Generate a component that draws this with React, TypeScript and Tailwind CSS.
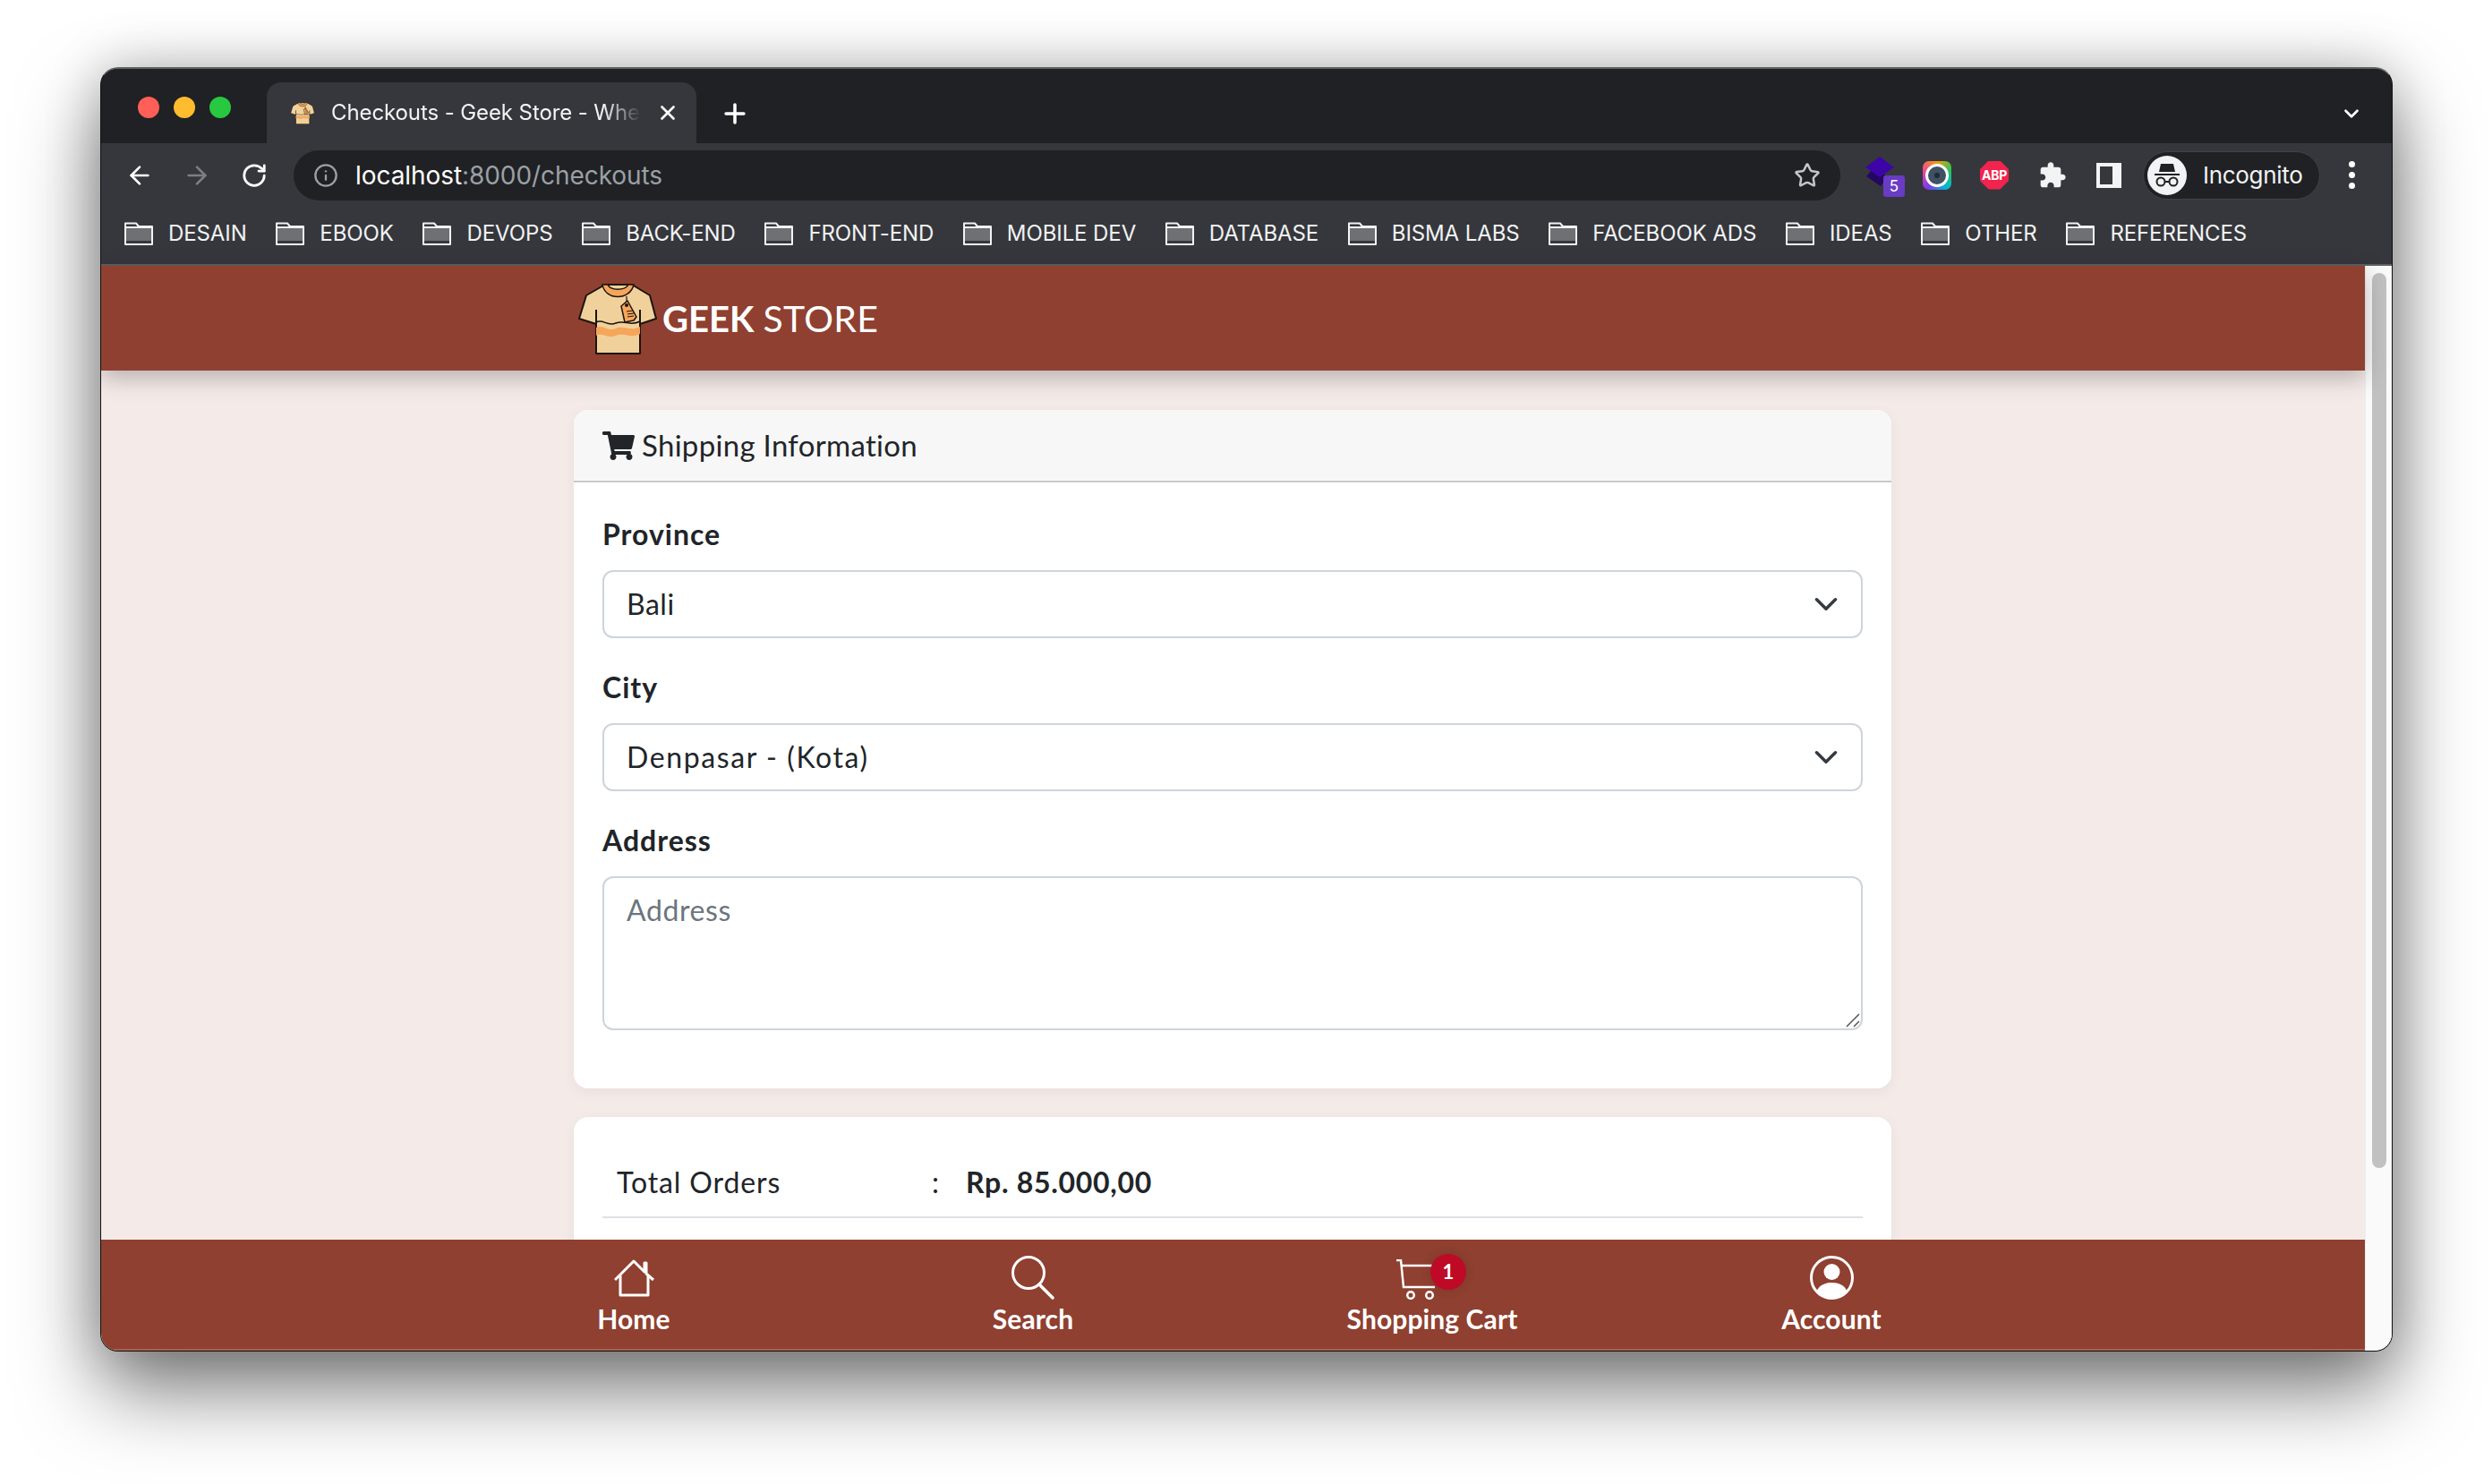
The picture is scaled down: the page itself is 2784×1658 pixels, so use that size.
import { ChevronDown, Star, Plus, X, ArrowLeft, ArrowRight, RotateCw, Info } from 'lucide-react';
import { FaShoppingCart } from 'react-icons/fa';

const bookmarks = ['DESAIN', 'EBOOK', 'DEVOPS', 'BACK-END', 'FRONT-END', 'MOBILE DEV', 'DATABASE', 'BISMA LABS', 'FACEBOOK ADS', 'IDEAS', 'OTHER', 'REFERENCES'];

function Shirt({ className }: { className: string }) {
  return (
    <svg className={className} viewBox="0 0 88 80" fill="none">
      <path d="M30 2H60L80 14L87 40L69 46V79H20V46L1 40L9 14Z" fill="#f1d19b" stroke="#1c1410" strokeWidth="2" strokeLinejoin="round" />
      <path d="M27 2C30 20 58 20 62 2L56 2C52 9 36 9 33 2Z" fill="#f6a65a" stroke="#1c1410" strokeWidth="1.5" />
      <path d="M20 50C28 46 32 55 42 51C52 47 58 55 69 49V57C58 63 52 55 42 59C32 63 28 55 20 59Z" fill="#f6a65a" />
      <path d="M20 44C28 40 32 49 42 45C52 41 58 49 69 43" stroke="#1c1410" strokeWidth="1.5" />
      <path d="M20 30V46M69 30V46" stroke="#1c1410" strokeWidth="2" />
      <path d="M54 15V24" stroke="#1c1410" strokeWidth="1.2" />
      <path d="M48 26L55 20L65 38L62 42L52 44Z" fill="#f6a65a" stroke="#1c1410" strokeWidth="1.5" strokeLinejoin="round" />
      <circle cx="54" cy="25" r="2" fill="#1c1410" />
      <path d="M54 32L61 31M55 35L62 34M55 38L62 37" stroke="#1c1410" strokeWidth="1" />
    </svg>
  );
}

function FolderIcon() {
  return (
    <svg className="w-[32px] h-[26px] mr-[17px] shrink-0" viewBox="0 0 32 26" fill="none">
      <path d="M1 1.5H13L16 5H31V25H1Z" fill="#36373c" stroke="#f1f3f4" strokeWidth="2" strokeLinejoin="round" />
      <path d="M2 7H30V21H2Z" fill="#6f7073" />
      <path d="M2 6H30" stroke="#f1f3f4" strokeWidth="2" />
    </svg>
  );
}

function NavItem({ label, icon }: { label: string; icon: React.ReactNode }) {
  return (
    <div className="w-[446px] flex flex-col items-center">
      <div className="h-[50px] flex items-end">{icon}</div>
      <span className="mt-[4px] text-[30px] leading-[36px] font-bold tracking-[0.1px] text-white">{label}</span>
    </div>
  );
}

function Field({ label, children }: { label: string; children: React.ReactNode }) {
  return (
    <div className="mb-[31px]">
      <label className="block text-[32px] leading-[48px] font-bold tracking-[1px] text-[#212529] mb-[16px]">{label}</label>
      {children}
    </div>
  );
}

function Select({ value, spacing }: { value: string; spacing: string }) {
  return (
    <div className="h-[76px] border-2 border-[#ced4da] rounded-[12px] pl-[25px] pr-[18px] flex items-center justify-between bg-white">
      <span className={`text-[32px] text-[#212529] ${spacing}`}>{value}</span>
      <ChevronDown className="w-[42px] h-[42px] text-[#343a40]" strokeWidth={2} />
    </div>
  );
}

export default function App() {
  return (
    <div className="w-[2784px] h-[1658px] bg-white pt-[75px] pl-[112px] overflow-hidden">
      <div className="w-[2561px] h-[1435px] rounded-[20px] overflow-hidden flex flex-col bg-[#202124] border border-[#111] border-t-2 border-t-[#5f6063] shadow-[0_44px_90px_rgba(0,0,0,0.5),0_0_60px_rgba(0,0,0,0.22)] font-['Inter',sans-serif]">
        {/* tab strip */}
        <div className="h-[83px] shrink-0 flex items-end pl-[41px] pr-[32px] bg-[#202124]">
          <div className="flex gap-[16px] self-start mt-[31px] mr-[40px]">
            <span className="w-[24px] h-[24px] rounded-full bg-[#ff5f57]" />
            <span className="w-[24px] h-[24px] rounded-full bg-[#febc2e]" />
            <span className="w-[24px] h-[24px] rounded-full bg-[#28c840]" />
          </div>
          <div className="w-[480px] h-[68px] rounded-t-[16px] bg-[#36373c] flex items-center pl-[26px] text-white">
            <Shirt className="w-[28px] h-[25px] mr-[18px] shrink-0" />
            <span className="w-[346px] overflow-hidden whitespace-nowrap text-[24px] tracking-[-0.1px] text-[#f1f3f4] [mask-image:linear-gradient(to_right,black_88%,transparent)]">Checkouts - Geek Store - Where Geeks Shop</span>
            <X className="w-[26px] h-[26px] ml-[17px] shrink-0" strokeWidth={2.5} />
          </div>
          <Plus className="w-[34px] h-[34px] text-white ml-[26px] mb-[16px]" strokeWidth={2.5} />
          <ChevronDown className="w-[26px] h-[26px] text-white ml-auto mb-[20px]" strokeWidth={2.5} />
        </div>
        {/* toolbar */}
        <div className="h-[69px] shrink-0 bg-[#36373c] flex items-center pt-[2px] pl-[27px]">
          <ArrowLeft className="w-[32px] h-[32px] text-white mr-[32px]" strokeWidth={2} />
          <ArrowRight className="w-[32px] h-[32px] text-[#7d7e82] mr-[33px]" strokeWidth={2} />
          <RotateCw className="w-[30px] h-[30px] text-white mr-[29px]" strokeWidth={2.2} />
          <div className="w-[1728px] h-[56px] rounded-full bg-[#202124] flex items-center pl-[22px] pr-[22px]">
            <Info className="w-[28px] h-[28px] text-[#9aa0a6] mr-[19px]" strokeWidth={2} />
            <span className="text-[28px] tracking-[-0.07px] text-white">localhost</span>
            <span className="text-[28px] tracking-[-0.07px] text-[#9aa0a6]">:8000/checkouts</span>
            <Star className="w-[30px] h-[30px] ml-auto text-[#c4c7c9]" strokeWidth={2} />
          </div>
          <div className="relative w-[32px] h-[44px] ml-[28px] mr-[32px]">
            <svg className="w-[32px] h-[34px] mt-[1px]" viewBox="0 0 32 34">
              <path d="M1 22L8 14L25 22L17 33Z" fill="#22085f" />
              <path d="M16 0L32 12L16 23L0 12Z" fill="#3d05a8" />
            </svg>
            <span className="absolute -right-[12px] bottom-[-2px] w-[24px] h-[24px] rounded-[3px] bg-[#6a3bc4] text-white text-[17px] leading-[24px] text-center">5</span>
          </div>
          <div className="w-[32px] h-[32px] rounded-[7px] bg-[conic-gradient(#f59e0b,#22c55e,#06b6d4,#7c3aed,#ec4899,#f59e0b)] flex items-center justify-center mr-[32px]">
            <div className="w-[26px] h-[26px] rounded-full border-[3px] border-white bg-[#3f5163] flex items-center justify-center">
              <div className="w-[6px] h-[6px] rounded-full bg-[#1f2b36]" />
            </div>
          </div>
          <div className="w-[32px] h-[32px] bg-[#f0244e] text-white text-[14px] font-bold tracking-[-0.3px] leading-[32px] text-center mr-[33px] [clip-path:polygon(30%_0,70%_0,100%_30%,100%_70%,70%_100%,30%_100%,0_70%,0_30%)]">ABP</div>
          <svg className="w-[32px] h-[32px] mr-[33px]" viewBox="0 0 24 24" fill="#f1f3f4">
            <path d="M20.5 11H19V7c0-1.1-.9-2-2-2h-4V3.5C13 2.12 11.88 1 10.5 1S8 2.12 8 3.5V5H4c-1.1 0-1.99.9-1.99 2v3.8H3.5c1.49 0 2.7 1.21 2.7 2.7s-1.21 2.7-2.7 2.7H2V20c0 1.1.9 2 2 2h3.8v-1.5c0-1.49 1.21-2.7 2.7-2.7 1.49 0 2.7 1.21 2.7 2.7V22H17c1.1 0 2-.9 2-2v-4h1.5c1.38 0 2.5-1.12 2.5-2.5S21.88 11 20.5 11z" />
          </svg>
          <div className="w-[28px] h-[28px] border-[4px] border-r-[10px] border-[#f1f3f4] mr-[24px]" />
          <div className="w-[198px] h-[54px] rounded-full bg-[#202124] border border-[#414247] flex items-center pl-[4px]">
            <div className="w-[44px] h-[44px] rounded-full bg-[#f1f3f4] flex items-center justify-center mr-[18px]">
              <svg className="w-[34px] h-[34px]" viewBox="0 0 34 34" fill="none">
                <path d="M10 4H24L26 13H8ZM3 15H31V17H3Z" fill="#202124" />
                <circle cx="10" cy="24" r="4.5" stroke="#202124" strokeWidth="2" />
                <circle cx="24" cy="24" r="4.5" stroke="#202124" strokeWidth="2" />
                <path d="M14.5 24H19.5" stroke="#202124" strokeWidth="2" />
              </svg>
            </div>
            <span className="text-[26px] tracking-[-0.3px] text-[#f1f3f4]">Incognito</span>
          </div>
          <div className="flex flex-col gap-[5px] ml-[32px]">
            <span className="w-[7px] h-[7px] rounded-full bg-white" />
            <span className="w-[7px] h-[7px] rounded-full bg-white" />
            <span className="w-[7px] h-[7px] rounded-full bg-white" />
          </div>
        </div>
        {/* bookmarks */}
        <div className="h-[68px] shrink-0 bg-[#36373c] border-b-2 border-b-[#5f6063] flex items-center gap-[32.7px] pb-[3px] pl-[26px] whitespace-nowrap">
          {bookmarks.map((name) => (
            <div key={name} className="flex items-center">
              <FolderIcon />
              <span className="text-[24px] tracking-[-0.1px] text-[#f1f3f4]">{name}</span>
            </div>
          ))}
        </div>
        {/* page */}
        <div className="flex-1 min-h-0 flex bg-white">
          <div className="flex-1 min-w-0 flex flex-col font-['Lato',sans-serif]">
            <header className="h-[117px] shrink-0 bg-[#8f4030] flex items-center pl-[533px] shadow-[0_8px_24px_rgba(0,0,0,0.25)] relative z-10">
              <Shirt className="w-[88px] h-[80px] mr-[6px]" />
              <span className="text-[40px] leading-none font-bold text-white mr-[10px]">GEEK</span>
              <span className="text-[41px] leading-none tracking-[0.3px] text-white">STORE</span>
            </header>
            <main className="flex-1 min-h-0 overflow-hidden bg-[#f4eae8] pt-[44px] pl-[528px]">
              <section className="w-[1472px] h-[758px] rounded-[16px] overflow-hidden bg-white shadow-[0_4px_16px_rgba(0,0,0,0.05)] mb-[32px]">
                <div className="h-[81px] bg-[#f7f7f7] border-b-2 border-b-[#c9c9c9] flex items-center pl-[32px]">
                  <FaShoppingCart className="w-[36px] h-[32px] text-[#212529] mr-[8px]" />
                  <span className="text-[33px] tracking-[0.3px] text-[#212529]">Shipping Information</span>
                </div>
                <div className="pt-[34px] px-[32px]">
                  <Field label="Province"><Select value="Bali" spacing="tracking-[0.5px]" /></Field>
                  <Field label="City"><Select value="Denpasar - (Kota)" spacing="tracking-[1.6px]" /></Field>
                  <Field label="Address">
                    <div className="relative h-[172px] border-2 border-[#ced4da] rounded-[12px] pl-[25px] pt-[12px] text-[32px] tracking-[0.6px] text-[#6c757d]">
                      Address
                      <svg className="absolute right-[1px] bottom-[1px] w-[16px] h-[16px]" viewBox="0 0 16 16" stroke="#555" strokeWidth="1.5">
                        <path d="M1 15L15 1M9 15L15 9" />
                      </svg>
                    </div>
                  </Field>
                </div>
              </section>
              <section className="w-[1472px] h-[300px] rounded-[16px] bg-white shadow-[0_4px_16px_rgba(0,0,0,0.05)] px-[32px] pt-[49px]">
                <div className="h-[64px] border-b-2 border-b-[#dee2e6] flex text-[32px] text-[#212529] pl-[16px]">
                  <span className="w-[352px] tracking-[0.9px]">Total Orders</span>
                  <span className="w-[38px]">:</span>
                  <span className="font-bold tracking-[0.7px]">Rp. 85.000,00</span>
                </div>
              </section>
            </main>
            <footer className="h-[124px] shrink-0 bg-[#8f4030] border-b-2 border-b-[#a9604f] flex pl-[372px] pt-[16px] relative z-10">
              <NavItem label="Home" icon={
                <svg className="w-[45px] h-[42px] mb-[2px]" viewBox="0 0 45 42" fill="none" stroke="white" strokeWidth="3" strokeLinejoin="round">
                  <path d="M1 23L22 2L34 14V4H36V16L44 23" />
                  <path d="M7 18V40H38V18" />
                </svg>
              } />
              <NavItem label="Search" icon={
                <svg className="w-[48px] h-[49px] -mb-[1px]" viewBox="0 0 48 49" fill="none" stroke="white" strokeWidth="3">
                  <circle cx="19" cy="19" r="17.5" />
                  <path d="M31 32L46 47" strokeWidth="3.5" strokeLinecap="round" />
                </svg>
              } />
              <NavItem label="Shopping Cart" icon={
                <div className="relative w-[46px] h-[45px] mr-[34px] -mb-[1px]">
                  <svg className="w-[46px] h-[45px]" viewBox="0 0 46 45" fill="none" stroke="white" strokeWidth="2.5">
                    <path d="M0 1H5L8 31H43M6 7H46" />
                    <circle cx="16" cy="40" r="3.8" />
                    <circle cx="37" cy="40" r="3.8" />
                  </svg>
                  <span className="absolute -right-[32px] -top-[6px] w-[40px] h-[40px] rounded-full bg-[#be0a26] shadow-[0_0_12px_rgba(0,0,0,0.15)] text-white text-[22px] leading-[40px] font-bold text-center">1</span>
                </div>
              } />
              <NavItem label="Account" icon={
                <svg className="w-[49px] h-[49px] -mb-[1px]" viewBox="0 0 49 49" fill="none">
                  <circle cx="24.5" cy="24.5" r="23" stroke="white" strokeWidth="3" />
                  <circle cx="24.5" cy="18" r="9" fill="white" />
                  <path d="M8 39C12 27 37 27 41 39C33 50 16 50 8 39Z" fill="white" />
                </svg>
              } />
            </footer>
          </div>
          <div className="w-[30px] shrink-0 bg-[#fafafa] border-l border-l-[#ececec] pt-[8px] pl-[7px]">
            <div className="w-[16px] h-[1000px] rounded-full bg-[#c1c1c1]" />
          </div>
        </div>
      </div>
    </div>
  );
}
